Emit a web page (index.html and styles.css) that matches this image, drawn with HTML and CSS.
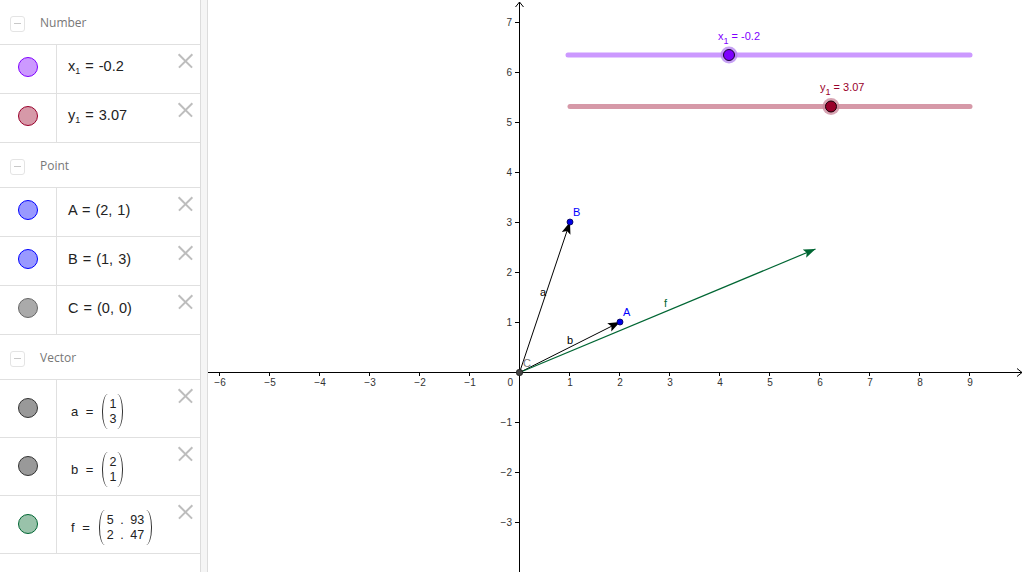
FILE: index.html
```html
<!DOCTYPE html>
<html>
<head>
<meta charset="utf-8">
<link rel="stylesheet" href="styles.css">
</head>
<body>
<div class="app">
  <div class="algebra">
    <div class="group">
      <div class="ghead"><span class="toggle"></span><span class="gtitle">Number</span></div>
      <div class="item"><div class="mark"><span class="dot dot-x1"></span></div><div class="val"><span>x<sub>1</sub> = -0.2</span></div><span class="del"></span></div>
      <div class="item"><div class="mark"><span class="dot dot-y1"></span></div><div class="val"><span>y<sub>1</sub> = 3.07</span></div><span class="del"></span></div>
    </div>
    <div class="group">
      <div class="ghead"><span class="toggle"></span><span class="gtitle">Point</span></div>
      <div class="item"><div class="mark"><span class="dot dot-pt"></span></div><div class="val"><span>A = (2, 1)</span></div><span class="del"></span></div>
      <div class="item"><div class="mark"><span class="dot dot-pt"></span></div><div class="val"><span>B = (1, 3)</span></div><span class="del"></span></div>
      <div class="item"><div class="mark"><span class="dot dot-c"></span></div><div class="val"><span>C = (0, 0)</span></div><span class="del"></span></div>
    </div>
    <div class="group">
      <div class="ghead"><span class="toggle"></span><span class="gtitle">Vector</span></div>
      <div class="item tall"><div class="mark"><span class="dot dot-v"></span></div><div class="val vec"><span class="lhs">a =</span><span class="mat"><span class="pl"></span><span class="cells"><span>1</span><span>3</span></span><span class="pr"></span></span></div><span class="del"></span></div>
      <div class="item tall"><div class="mark"><span class="dot dot-v"></span></div><div class="val vec"><span class="lhs">b =</span><span class="mat"><span class="pl"></span><span class="cells"><span>2</span><span>1</span></span><span class="pr"></span></span></div><span class="del"></span></div>
      <div class="item tall"><div class="mark"><span class="dot dot-f"></span></div><div class="val vec"><span class="lhs">f =</span><span class="mat"><span class="pl"></span><span class="cells wide"><span>5 . 93</span><span>2 . 47</span></span><span class="pr"></span></span></div><span class="del"></span></div>
    </div>
  </div>
  <div class="splitter"></div>
  <div class="graphics">
    <svg class="plot" width="816" height="572" viewBox="208 0 816 572" xmlns="http://www.w3.org/2000/svg">
      <defs>
        <marker id="ah" markerUnits="userSpaceOnUse" markerWidth="14" markerHeight="10" refX="12" refY="4.5" orient="auto">
          <path d="M0,0 L12,4.5 L0,9 L2.5,4.5 Z" fill="#000"/>
        </marker>
        <marker id="ahg" markerUnits="userSpaceOnUse" markerWidth="14" markerHeight="10" refX="12" refY="4.5" orient="auto">
          <path d="M0,0 L12,4.5 L0,9 L2.5,4.5 Z" fill="#006633"/>
        </marker>
      </defs>
      <g stroke="#000" stroke-width="1" fill="none">
        <line x1="208" y1="372.5" x2="1022" y2="372.5"/>
        <polyline points="1017,368.5 1022,372.5 1017,376.5"/>
        <line x1="519.5" y1="2" x2="519.5" y2="572"/>
        <polyline points="515.5,7 519.5,2 523.5,7"/>
      </g>
      <g stroke="#000" stroke-width="1">
        <line x1="219.5" y1="372" x2="219.5" y2="376"/>
        <line x1="269.5" y1="372" x2="269.5" y2="376"/>
        <line x1="319.5" y1="372" x2="319.5" y2="376"/>
        <line x1="369.5" y1="372" x2="369.5" y2="376"/>
        <line x1="419.5" y1="372" x2="419.5" y2="376"/>
        <line x1="469.5" y1="372" x2="469.5" y2="376"/>
        <line x1="569.5" y1="372" x2="569.5" y2="376"/>
        <line x1="619.5" y1="372" x2="619.5" y2="376"/>
        <line x1="669.5" y1="372" x2="669.5" y2="376"/>
        <line x1="719.5" y1="372" x2="719.5" y2="376"/>
        <line x1="769.5" y1="372" x2="769.5" y2="376"/>
        <line x1="819.5" y1="372" x2="819.5" y2="376"/>
        <line x1="869.5" y1="372" x2="869.5" y2="376"/>
        <line x1="919.5" y1="372" x2="919.5" y2="376"/>
        <line x1="969.5" y1="372" x2="969.5" y2="376"/>
        <line x1="515" y1="22.5" x2="519" y2="22.5"/>
        <line x1="515" y1="72.5" x2="519" y2="72.5"/>
        <line x1="515" y1="122.5" x2="519" y2="122.5"/>
        <line x1="515" y1="172.5" x2="519" y2="172.5"/>
        <line x1="515" y1="222.5" x2="519" y2="222.5"/>
        <line x1="515" y1="272.5" x2="519" y2="272.5"/>
        <line x1="515" y1="322.5" x2="519" y2="322.5"/>
        <line x1="515" y1="422.5" x2="519" y2="422.5"/>
        <line x1="515" y1="472.5" x2="519" y2="472.5"/>
        <line x1="515" y1="522.5" x2="519" y2="522.5"/>
      </g>
      <g class="ticklbl" text-anchor="middle">
        <text x="220" y="386">−6</text>
        <text x="270" y="386">−5</text>
        <text x="320" y="386">−4</text>
        <text x="370" y="386">−3</text>
        <text x="420" y="386">−2</text>
        <text x="470" y="386">−1</text>
        <text x="570" y="386">1</text>
        <text x="620" y="386">2</text>
        <text x="670" y="386">3</text>
        <text x="720" y="386">4</text>
        <text x="770" y="386">5</text>
        <text x="820" y="386">6</text>
        <text x="870" y="386">7</text>
        <text x="920" y="386">8</text>
        <text x="970" y="386">9</text>
      </g>
      <g class="ticklbl" text-anchor="end">
        <text x="513" y="386">0</text>
        <text x="512" y="26">7</text>
        <text x="512" y="76">6</text>
        <text x="512" y="126">5</text>
        <text x="512" y="176">4</text>
        <text x="512" y="226">3</text>
        <text x="512" y="276">2</text>
        <text x="512" y="326">1</text>
        <text x="512" y="426">−1</text>
        <text x="512" y="476">−2</text>
        <text x="512" y="526">−3</text>
      </g>
      <line x1="568" y1="55" x2="970" y2="55" stroke="#cc99ff" stroke-width="5" stroke-linecap="round"/>
      <circle cx="729" cy="55" r="8.5" fill="#b380f0" fill-opacity="0.75"/>
      <circle cx="729" cy="55" r="5.5" fill="#7f00ff" stroke="#1a0033" stroke-width="1"/>
      <text class="lbl" x="718" y="40" fill="#7f00ff">x<tspan dy="4" font-size="9">1</tspan><tspan dy="-4"> = -0.2</tspan></text>

      <line x1="570" y1="106.5" x2="970" y2="106.5" stroke="#d699a8" stroke-width="5" stroke-linecap="round"/>
      <circle cx="831" cy="106.5" r="8.5" fill="#c9869a" fill-opacity="0.75"/>
      <circle cx="831" cy="106.5" r="5.5" fill="#99002b" stroke="#1a0008" stroke-width="1"/>
      <text class="lbl" x="820" y="91" fill="#99002b">y<tspan dy="4" font-size="9">1</tspan><tspan dy="-4"> = 3.07</tspan></text>

      <line x1="519.5" y1="372.5" x2="570" y2="222" stroke="#000" stroke-width="1" marker-end="url(#ah)"/>
      <line x1="519.5" y1="372.5" x2="620" y2="322" stroke="#000" stroke-width="1" marker-end="url(#ah)"/>
      <line x1="519.5" y1="372.5" x2="815.5" y2="249" stroke="#006633" stroke-width="1.2" marker-end="url(#ahg)"/>
      <text class="lbl" x="540" y="296" fill="#000">a</text>
      <text class="lbl" x="567" y="344" fill="#000">b</text>
      <text class="lbl" x="664" y="307" fill="#006633">f</text>

      <circle cx="620" cy="322" r="3" fill="#0000e6" stroke="#00004d" stroke-width="0.8"/>
      <circle cx="570" cy="222" r="3" fill="#0000e6" stroke="#00004d" stroke-width="0.8"/>
      <text class="lbl" x="623" y="316" fill="#0000ff">A</text>
      <text class="lbl" x="573" y="216" fill="#0000ff">B</text>
      <circle cx="519.5" cy="372.5" r="3.2" fill="#444" stroke="#222" stroke-width="0.8"/>
      <text class="lbl" x="523" y="367" fill="#777">C</text>
    </svg>
  </div>
</div>
</body>
</html>
```
FILE: styles.css
```css
html, body {
  margin: 0;
  padding: 0;
  background: #fff;
}
.app {
  display: flex;
  width: 1024px;
  height: 572px;
  overflow: hidden;
}
.algebra {
  width: 200px;
  flex: none;
  display: flex;
  flex-direction: column;
  background: #fff;
}
.splitter {
  width: 6px;
  flex: none;
  background: #f5f5f5;
  border-left: 1px solid #dcdcdc;
  border-right: 1px solid #dcdcdc;
}
.graphics {
  flex: 1;
  position: relative;
}
.plot {
  display: block;
}
.ghead {
  height: 44px;
  border-bottom: 1px solid #e0e0e0;
  display: flex;
  align-items: center;
  padding-left: 10px;
}
.toggle {
  width: 13px;
  height: 14px;
  border: 1px solid #e4e4e4;
  border-radius: 3px;
  position: relative;
  margin-right: 15px;
  margin-top: 3px;
}
.toggle::after {
  content: "";
  position: absolute;
  left: 3px;
  right: 3px;
  top: 6px;
  height: 1px;
  background: #c8c8c8;
}
.gtitle {
  font-family: "Open Sans", "Liberation Sans", sans-serif;
  font-size: 12px;
  color: #777;
  margin-top: 1px;
}
.item {
  height: 48px;
  border-bottom: 1px solid #e0e0e0;
  display: flex;
  position: relative;
}
.item.tall {
  height: 57px;
}
.mark {
  width: 56px;
  flex: none;
  border-right: 1px solid #e0e0e0;
  display: flex;
  align-items: center;
  justify-content: center;
}
.dot {
  width: 18px;
  height: 18px;
  border-radius: 50%;
  border: 1px solid #333;
  margin-bottom: 4px;
}
.tall .dot {
  margin-bottom: 2px;
}
.dot-x1 { background: #cc99ff; border-color: #7f00ff; }
.dot-y1 { background: #d699a8; border-color: #99002b; }
.dot-pt { background: #9999ff; border-color: #0000ff; }
.dot-c { background: #aaaaaa; border-color: #666666; }
.dot-v { background: #999999; border-color: #333333; }
.dot-f { background: #99c2aa; border-color: #006633; }
.val {
  display: flex;
  align-items: center;
  padding-left: 11px;
  padding-bottom: 4px;
  font-family: "Liberation Sans", Arial, sans-serif;
  font-size: 14.5px;
  color: #222;
  word-spacing: 1px;
}
.val sub {
  font-size: 9px;
  vertical-align: -3px;
}
.vec {
  padding-left: 14px;
  padding-top: 6px;
  padding-bottom: 0;
  font-size: 13px;
  word-spacing: 4px;
}
.mat {
  display: inline-flex;
  align-items: stretch;
  margin-left: 9px;
  height: 35px;
  word-spacing: 0;
}
.pl, .pr {
  width: 5px;
  border: 0 solid #333;
}
.pl {
  border-left-width: 1.3px;
  border-radius: 6px 0 0 6px / 17px 0 0 17px;
}
.pr {
  border-right-width: 1.3px;
  border-radius: 0 6px 6px 0 / 0 17px 17px 0;
}
.cells {
  display: flex;
  flex-direction: column;
  justify-content: center;
  align-items: center;
  font-size: 12.5px;
  line-height: 15px;
  white-space: pre;
  padding: 0 1px;
}
.cells.wide {
  word-spacing: 3px;
  padding: 0 2px;
}
.del {
  position: absolute;
  right: 7px;
  top: 8px;
  width: 15px;
  height: 15px;
}
.del::before, .del::after {
  content: "";
  position: absolute;
  left: -2px;
  top: 7px;
  width: 19px;
  height: 1.5px;
  background: #bdbdbd;
  transform: rotate(45deg);
}
.del::after {
  transform: rotate(-45deg);
}
.ticklbl text {
  font-family: "Liberation Sans", Arial, sans-serif;
  font-size: 10px;
  fill: #333;
}
.lbl {
  font-family: "Liberation Sans", Arial, sans-serif;
  font-size: 11px;
}
```
